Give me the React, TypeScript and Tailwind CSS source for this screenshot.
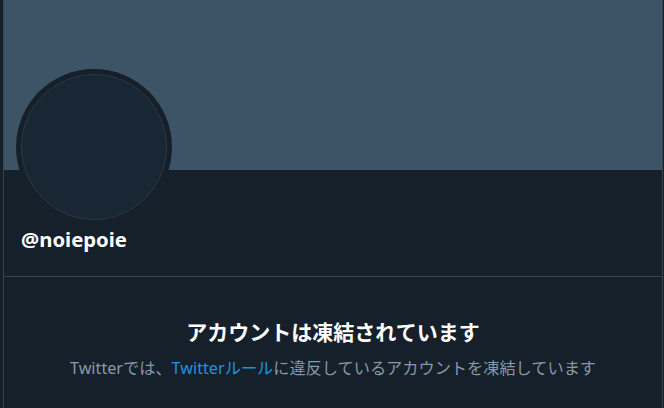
export default function App() {
  return (
    <div className="w-[664px] h-[408px] bg-[#15202b] overflow-hidden" style={{ fontFamily: '"Noto Sans", "Noto Sans CJK JP", sans-serif' }}>
      <div className="ml-[3px] w-[660px] h-[408px] border-x border-[#38444d] flex flex-col">
        <div className="h-[170px] bg-[#3d5466] shrink-0" />
        <div className="relative h-[107px] border-b border-[#38444d] shrink-0">
          <div className="absolute left-[12px] top-[-101px] w-[156px] h-[156px] rounded-full bg-[#15202b] p-[5px]">
            <div className="w-full h-full rounded-full bg-[#192734] border border-[#2a3744]" />
          </div>
          <div className="absolute left-[17px] top-[57px] text-[20.3px] leading-[24px] font-bold text-white">@noiepoie</div>
        </div>
        <div className="flex flex-col items-center pt-[40px]">
          <div className="text-[21px] leading-[28px] font-bold text-white" style={{ fontFamily: '"Noto Sans CJK JP", sans-serif' }}>
            アカウントは凍結されています
          </div>
          <div className="mt-[12px] text-[16.2px] leading-[22px] text-[#8899a6]" style={{ fontFamily: '"Noto Sans", "Noto Sans CJK JP", sans-serif' }}>
            Twitterでは、<span className="text-[#1b95e0]">Twitterルール</span>に違反しているアカウントを凍結しています
          </div>
        </div>
      </div>
    </div>
  );
}
